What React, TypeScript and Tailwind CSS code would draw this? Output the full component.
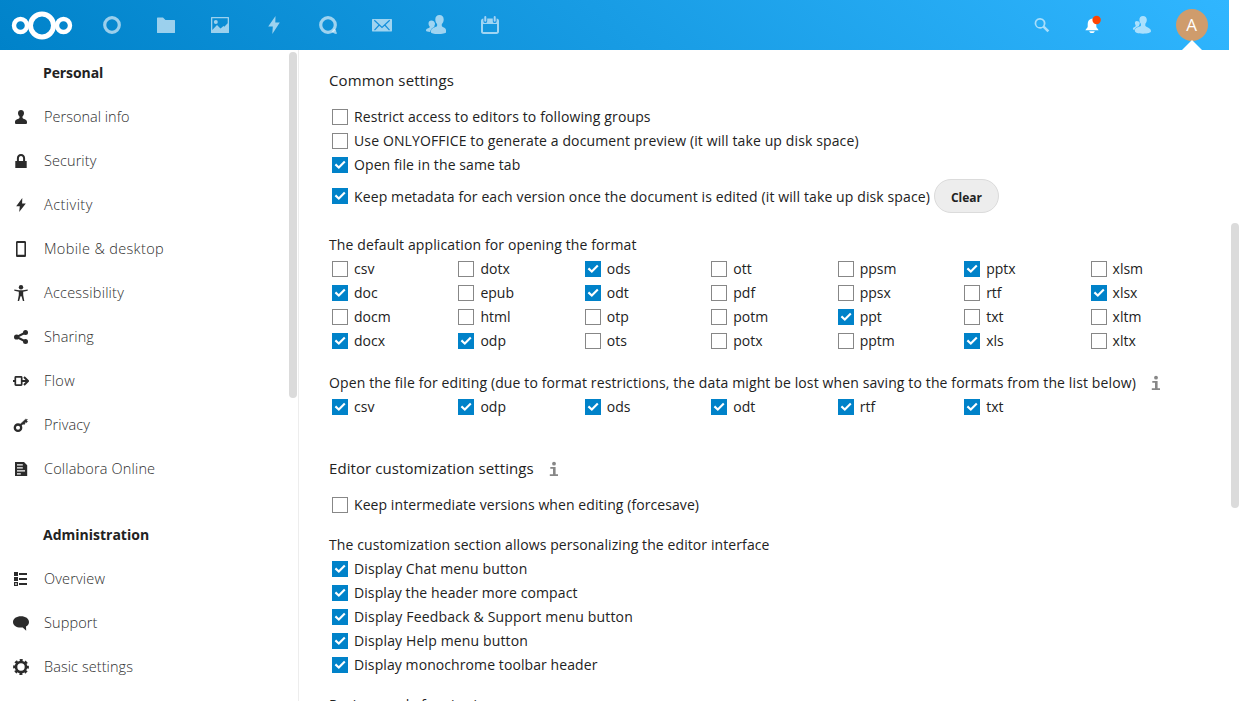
import React from "react";

type Svg = { children: React.ReactNode; box?: string; className?: string };

function Icon({ children, box = "0 0 16 16", className = "h-4 w-4" }: Svg) {
  return (
    <svg viewBox={box} className={`shrink-0 ${className}`} fill="currentColor" aria-hidden="true">
      {children}
    </svg>
  );
}

const BOLT = "M9.3 1 3.2 9.2h3.6L6.2 15l6.6-8.6H9.1z";

function Check({ on }: { on?: boolean }) {
  return on ? (
    <span className="flex h-4 w-4 shrink-0 items-center justify-center bg-[#0082c9] text-white">
      <svg viewBox="0 0 16 16" className="h-4 w-4" fill="none" stroke="currentColor" strokeWidth="2.1">
        <path d="M3.4 7.4 6.8 10.500l6-6" />
      </svg>
    </span>
  ) : (
    <span className="h-4 w-4 shrink-0 border border-[#878787] bg-white" />
  );
}

function Option({ on, label, track = "tracking-[0.1px]", shift = "" }: { on?: boolean; label: string; track?: string; shift?: string }) {
  return (
    <label className="flex h-6 items-center pl-[3px]">
      <Check on={on} />
      <span className={`ml-[6px] whitespace-nowrap ${track} ${shift}`}>{label}</span>
    </label>
  );
}

function Info({ className = "" }: { className?: string }) {
  return (
    <Icon className={`h-4 w-4 text-[#878787] ${className}`}>
      <circle cx="8" cy="2.7" r="1.9" />
      <path d="M4.3 6h5.3v7.2h2.4V15H3.8v-1.800H7V7.700H4.300z" />
    </Icon>
  );
}

const personal: { label: string; track: string; icon: React.ReactNode }[] = [
  {
    label: "Personal info",
    track: "tracking-[0.02px]",
    icon: <path d="M8 1C6.300 1 5 2.200 5 4.100c0 1.500.6 2.700 1.500 3.500v1.500c-.5.9-4.500 1.300-4.500 4V14c0 .6.7 1 1.500 1h9c.8 0 1.500-.4 1.500-1v-.9c0-2.700-4-3.100-4.500-4V7.600C10.400 6.800 11 5.600 11 4.100 11 2.200 9.700 1 8 1z" />,
  },
  {
    label: "Security",
    track: "tracking-[0.08px]",
    icon: <path fillRule="evenodd" d="M8 1C5.500 1 3.900 2.900 3.900 5.300V8H2.300v7h11.400V8h-1.600V5.300C12.100 2.900 10.500 1 8 1zm0 2c1.300 0 2.100 1 2.100 2.500V8H5.900V5.500C5.900 4 6.700 3 8 3z" />,
  },
  { label: "Activity", track: "tracking-[0.45px]", icon: <path d={BOLT} /> },
  {
    label: "Mobile & desktop",
    track: "tracking-[0.35px]",
    icon: <path fillRule="evenodd" d="M4.500 0h7c1 0 1.500.5 1.500 1.500v13c0 1-.5 1.500-1.500 1.500h-7C3.500 16 3 15.500 3 14.500v-13C3 .5 3.500 0 4.500 0zM4.600 2v11.800h6.800V2z" />,
  },
  {
    label: "Accessibility",
    track: "tracking-[0.22px]",
    icon: (
      <>
        <circle cx="8" cy="2.200" r="2.200" />
        <path d="M1.300 4.500 6 5.200h4l4.700-.7v1.300l-4.500.9v3.300l1.100 6H9.900L8.500 11.200h-1L6.100 16H4.700l1.100-6V6.700l-4.500-.9z" />
      </>
    ),
  },
  {
    label: "Sharing",
    track: "tracking-[0.12px]",
    icon: (
      <>
        <circle cx="12.500" cy="3.500" r="2.500" />
        <circle cx="12.500" cy="12.500" r="2.500" />
        <circle cx="3.600" cy="8" r="2.600" />
        <path d="M12.500 3.500 3.600 8l8.900 4.500" fill="none" stroke="currentColor" strokeWidth="2" />
      </>
    ),
  },
  {
    label: "Flow",
    track: "tracking-[0.36px]",
    icon: (
      <>
        <rect x="2.300" y="3.800" width="6.400" height="8.400" rx=".6" fill="none" stroke="currentColor" strokeWidth="1.700" />
        <path d="M0 7h2v2H0zM9 7h5v2H9z" />
        <path d="m11 4 4 4-4 4" fill="none" stroke="currentColor" strokeWidth="2" />
      </>
    ),
  },
  {
    label: "Privacy",
    track: "tracking-[0.10px]",
    icon: (
      <>
        <circle cx="5" cy="10.700" r="3.200" fill="none" stroke="currentColor" strokeWidth="2.300" />
        <path d="m6.900 7.400 5.600-5.200 2 .3-.9 1.100 1 .9-1.100 1.200-1-.5-.8.8.4 1-1.300.6-.7-.6-1.700 1.700z" stroke="currentColor" strokeWidth=".4" />
      </>
    ),
  },
  {
    label: "Collabora Online",
    track: "tracking-[0.16px]",
    icon: <path fillRule="evenodd" d="M2 1H11l3.200 3.200V15H2zM4 3.200v1.300h5.800V3.200zm0 3v1.300h5.800V6.200zm0 3v1.300h8V9.200zm0 3v1.300h3.800v-1.300z" />,
  },
];

const administration: typeof personal = [
  {
    label: "Overview",
    track: "tracking-[0.16px]",
    icon: <path fillRule="evenodd" d="M1 1h4v4H1zM6 2h8v2H6zM1 6h4v4H1zm5 1h8v2H6zm-5 4h4v4H1zm1.200 1.200v1.600h1.600v-1.600zM6 12h8v2H6z" />,
  },
  {
    label: "Support",
    track: "tracking-[0.1px]",
    icon: <path d="M8 1.200c4.500 0 8 2.300 8 5.800 0 2-1.200 3.500-3 4.500l.2 4.200-3.500-3.300c-5.400.9-9.700-1.700-9.700-5.400C0 3.500 3.500 1.200 8 1.200z" />,
  },
  {
    label: "Basic settings",
    track: "tracking-[0.07px]",
    icon: (
      <>
        <circle cx="8" cy="8" r="5" fill="none" stroke="currentColor" strokeWidth="2.600" />
        <circle cx="8" cy="8" r="6.800" fill="none" stroke="currentColor" strokeWidth="2.200" strokeDasharray="2.970 2.370" strokeDashoffset="1.480" />
      </>
    ),
  },
];

function NavItem({ label, track, icon }: (typeof personal)[number]) {
  return (
    <li className="flex h-11 items-center pl-[13px] text-[14.5px] font-light">
      <Icon className="h-4 w-4 text-[#2b2b2b]">{icon}</Icon>
      <span className={`ml-[15px] whitespace-nowrap text-[#2e2e2e] ${track}`}>{label}</span>
    </li>
  );
}

const contacts = (
  <>
    <path d="M13.500 0C10.900 0 9.300 1.800 9.300 4.400c0 1.900.8 3.600 1.800 4.600v2c-.7 1.300-6.100 1.600-6.100 5v1.200C5 18.300 8 19 12 19s8-.7 8-1.800V15c0-2.600-3.800-2.700-4.200-4V9c1-.9 1.900-2.700 1.900-4.600C17.700 1.800 16.100 0 13.500 0z" />
    <path d="M5.300 5.500C3.700 5.500 2.500 6.600 2.500 8.400c0 1.200.5 2.300 1.100 2.900v1.300C3 13.300 0 13.500 0 15.600c0 1 1.900 1.400 4.200 1.500.2-2.700 2-4.200 4.200-5 0-.4-.1-.7-.1-1C8.700 10.500 9 9.600 9 8.500 8.500 6.700 7.500 5.500 5.300 5.500z" />
  </>
);

const apps: { name: string; icon: React.ReactNode }[] = [
  { name: "Dashboard", icon: <circle cx="10" cy="10" r="7.300" fill="none" stroke="currentColor" strokeWidth="3.200" /> },
  { name: "Files", icon: <path d="M1.600 2.500H7L9.500 5h8.900c.4 0 .6.200.6.600v11.800c0 .4-.2.600-.6.600H1.600c-.4 0-.6-.2-.6-.6V3.100c0-.4.2-.6.600-.6z" /> },
  {
    name: "Photos",
    icon: (
      <>
        <path fillRule="evenodd" d="M1.600 2h16.800c.4 0 .6.300.6.600v14.800c0 .4-.2.600-.6.600H1.600c-.4 0-.6-.2-.6-.6V2.600C1 2.300 1.200 2 1.600 2zm.7 1.300v11.800L7 10l3.500 3.500 3-2.500.8.700 3.400-3.400v-5z" />
        <circle cx="5.800" cy="7" r="2" />
      </>
    ),
  },
  { name: "Activity", icon: <path d="M11.500 1 4.200 11.500h4.600L8.300 19l7.500-11.400h-4.500z" /> },
  {
    name: "Talk",
    icon: (
      <>
        <circle cx="10" cy="10" r="7.300" fill="none" stroke="currentColor" strokeWidth="3.200" />
        <path d="m13.500 17 2.700-3.200 1.800 1.100c0 1.200.3 2.200 1 3.300-.3.800-1 .8-2 .6z" />
      </>
    ),
  },
  {
    name: "Mail",
    icon: (
      <>
        <path d="M.6 4h18.800c.4 0 .6.200.6.600v11.200c0 .4-.2.600-.6.600H.6c-.4 0-.6-.2-.6-.6V4.600C0 4.200.2 4 .6 4z" />
        <path d="m2.300 5.200 7.700 7.200 7.700-7.200M2.500 15.200 7.200 10M17.500 15.200 12.800 10" fill="none" stroke="#148fdc" strokeWidth="1.200" />
      </>
    ),
  },
  { name: "Contacts", icon: contacts },
  {
    name: "Calendar",
    icon: (
      <>
        <path fillRule="evenodd" d="M3.500 3.500h13c1.600 0 2.500.9 2.500 2.500v10.500c0 1.600-.9 2.500-2.500 2.500h-13C1.900 19 1 18.100 1 16.500V6c0-1.600.9-2.500 2.500-2.500zM3 9v7.500c0 .4.2.6.6.6h12.800c.4 0 .6-.2.600-.6V9z" />
        <path d="M5.300 2v4.200M14.700 2v4.200" stroke="#1794e2" strokeWidth="3.800" strokeLinecap="round" />
        <path d="M5.300 2v3.800M14.700 2v3.800" stroke="currentColor" strokeWidth="2" strokeLinecap="round" />
      </>
    ),
  },
];

function Header() {
  return (
    <header className="flex h-[50px] w-[1229px] items-center bg-[linear-gradient(40deg,#0082c9_0%,#30b6ff_100%)]">
      <svg viewBox="0 0 62 30" className="ml-[11px] h-[30px] w-[62px] shrink-0" fill="none" stroke="#fff" aria-label="Nextcloud">
        <circle cx="9.500" cy="15.500" r="6.500" strokeWidth="4.400" />
        <circle cx="31" cy="15.500" r="11.500" strokeWidth="5" />
        <circle cx="52.500" cy="15.500" r="6.500" strokeWidth="4.400" />
      </svg>
      <nav className="ml-[29px] flex gap-[34px] text-white/60">
        {apps.map((a) => (
          <Icon key={a.name} box="0 0 20 20" className="h-5 w-5">
            {a.icon}
          </Icon>
        ))}
      </nav>
      <div className="ml-auto flex h-full items-center pr-[21px] text-white/60">
        <Icon className="mr-8 h-4 w-4">
          <path
            fillRule="evenodd"
            d="M6 1a5.300 5.300 0 1 0 2.900 9.700l4.500 4.600 1.900-1.800-4.600-4.500A5.300 5.300 0 0 0 6 1zm0 1.700a3.700 3.700 0 1 1 0 7.400 3.700 3.700 0 0 1 0-7.400z"
          />
        </Icon>
        <Icon box="0 0 20 20" className="mr-[30px] h-5 w-5 text-white">
          <path d="M10.300 3.500C7.200 4 5.700 6 5.700 9v2.500c0 1.500-1.700 2.200-2.300 3.700h13.200c-.6-1.500-2.300-2.200-2.300-3.700V9c0-3-1-5-4-5.500zM7.200 16.200c.3 1.200 1.400 1.900 2.800 1.900s2.500-.7 2.800-1.900z" />
          <circle cx="14.600" cy="5" r="4.200" fill="#ff4402" />
        </Icon>
        <Icon box="0 0 20 20" className="mr-6 h-5 w-5">
          <path d="M11 1C8.600 1 7.400 2.600 7.400 4.800c0 1.700.6 3.100 1.500 4v1.900C8 12 2.800 12 2.800 15.600 2.800 17.900 6 18.700 11 18.700s8-.8 8-2.600c0-3.300-5-3.900-5.700-5.400V8.800c.9-.9 1.500-2.300 1.500-4C14.800 2.600 13.300 1 11 1z" />
          <path d="M4.700 6C3.600 6 2.900 6.900 2.900 8.100c0 .9.3 1.600.7 2v1.200c-.5.7-2.700.8-2.700 2.500 0 .7.600 1 1.400 1.200.6-2 2.600-3 4.600-3.700l.3-1.200c.4-.5.600-1.100.6-2C7.800 6.900 6 6 4.700 6z" />
        </Icon>
        <div className="relative flex h-full w-8 items-center justify-center">
          <span className="flex h-8 w-8 items-center justify-center rounded-full bg-[#cf9c6c] pr-px font-['Open_Sans',sans-serif] text-[17px] text-white">
            A
          </span>
          <svg viewBox="0 0 20 10" className="absolute bottom-0 left-[6px] h-[10px] w-5" fill="#fff">
            <path d="M0 10 10 0l10 10z" />
          </svg>
        </div>
      </div>
    </header>
  );
}

const formats: [string, boolean][][] = [
  [["csv", false], ["doc", true], ["docm", false], ["docx", true]],
  [["dotx", false], ["epub", false], ["html", false], ["odp", true]],
  [["ods", true], ["odt", true], ["otp", false], ["ots", false]],
  [["ott", false], ["pdf", false], ["potm", false], ["potx", false]],
  [["ppsm", false], ["ppsx", false], ["ppt", true], ["pptm", false]],
  [["pptx", true], ["rtf", false], ["txt", false], ["xls", true]],
  [["xlsm", false], ["xlsx", true], ["xltm", false], ["xltx", false]],
];

export default function App() {
  return (
    <div className="h-[708px] w-[1240px] overflow-hidden bg-white font-['Open_Sans','Noto_Sans',sans-serif] text-[14px] leading-6 text-[#222]">
      <Header />
      <div className="flex h-[651px] overflow-hidden">
        <aside className="flex w-[299px] shrink-0 justify-between border-r border-[#ededed]">
          <div className="pt-px">
            <h2 className="flex h-11 items-center pl-[43px] font-bold tracking-[-0.1px]">Personal</h2>
            <ul>
              {personal.map((p) => (
                <NavItem key={p.label} {...p} />
              ))}
            </ul>
            <h2 className="mt-[22px] flex h-11 items-center pl-[43px] font-bold">Administration</h2>
            <ul>
              {administration.map((p) => (
                <NavItem key={p.label} {...p} />
              ))}
            </ul>
          </div>
          <div className="mt-[2px] mr-px h-[346px] w-2 rounded-full bg-[#dbdbdb]" />
        </aside>

        <main className="w-[932px] shrink-0 pl-[30px]">
          <h3 className="mt-[19px] mb-[2px] text-[15px] leading-[22px] tracking-[0.14px]">Common settings</h3>
          <div className="mt-[14px]">
            <Option label="Restrict access to editors to following groups" track="tracking-[0.13px]" />
            <Option label="Use ONLYOFFICE to generate a document preview (it will take up disk space)" track="tracking-[0.125px]" />
            <Option on label="Open file in the same tab" />
            <div className="mt-[2px] flex h-[34px] items-center">
              <Option on label="Keep metadata for each version once the document is edited (it will take up disk space)" track="tracking-[0.114px]" shift="pt-[2px]" />
              <button className="ml-1 h-[34px] w-[65px] rounded-full border border-[#dbdbdb] bg-[#ededed] pt-[3px] text-[12px] font-bold">Clear</button>
            </div>
          </div>

          <p className="mt-5 tracking-[0.12px]">The default application for opening the format</p>
          <div className="grid w-[885px] grid-cols-7">
            {formats.map((column) => (
              <div key={column[0][0]}>
                {column.map(([name, on]) => (
                  <Option key={name} on={on} label={name} track="tracking-normal" />
                ))}
              </div>
            ))}
          </div>

          <div className="mt-[18px] flex items-center">
            <p className="whitespace-nowrap tracking-[0.124px]">
              Open the file for editing (due to format restrictions, the data might be lost when saving to the formats from the list below)
            </p>
            <Info className="ml-3" />
          </div>
          <div className="grid w-[885px] grid-cols-7">
            {["csv", "odp", "ods", "odt", "rtf", "txt"].map((name) => (
              <Option key={name} on label={name} track="tracking-normal" />
            ))}
          </div>

          <div className="mt-[38px] flex h-6 items-center">
            <h3 className="mb-[2px] whitespace-nowrap text-[15px] leading-[22px] tracking-[0.08px]">Editor customization settings</h3>
            <Info className="ml-3" />
          </div>
          <div className="mt-3">
            <Option label="Keep intermediate versions when editing (forcesave)" track="tracking-[0.073px]" />
          </div>

          <p className="mt-4 tracking-[0.095px]">The customization section allows personalizing the editor interface</p>
          <Option on label="Display Chat menu button" track="tracking-[0.12px]" />
          <Option on label="Display the header more compact" track="tracking-[0.09px]" />
          <Option on label="Display Feedback & Support menu button" track="tracking-[0.178px]" />
          <Option on label="Display Help menu button" track="tracking-[0.14px]" />
          <Option on label="Display monochrome toolbar header" track="tracking-[0.087px]" />

          <p className="mt-4 tracking-[0.1px]">Review mode for viewing</p>
        </main>
        <div className="mt-[173px] h-[285px] w-2 rounded-full bg-[#dbdbdb]" />
      </div>
    </div>
  );
}
